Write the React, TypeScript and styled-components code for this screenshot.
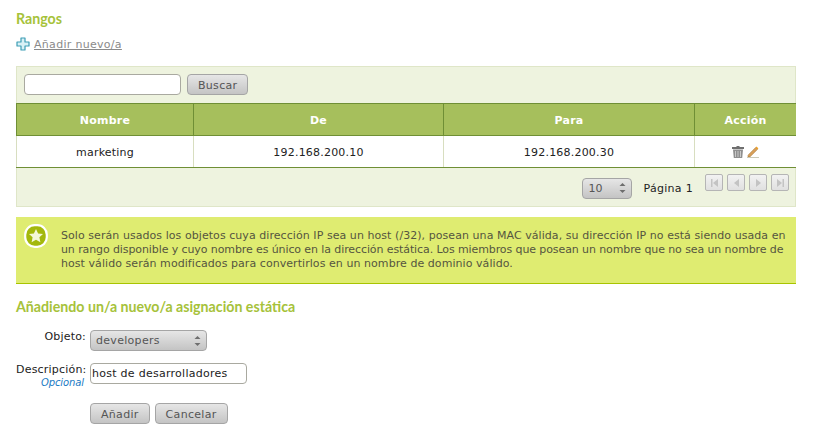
import React from 'react';
import styled, { createGlobalStyle } from 'styled-components';

const GlobalStyle = createGlobalStyle`
  html, body {
    margin: 0;
    padding: 0;
    background: #ffffff;
  }
  body {
    font-family: "DejaVu Sans", Verdana, sans-serif;
    font-size: 11px;
    color: #222222;
  }
`;

const PlusIcon = () => (
  <svg width="14" height="14" viewBox="0 0 14 14">
    <path
      d="M5 1h4v4h4v4H9v4H5V9H1V5h4z"
      fill="#d8f1f6"
      stroke="#3c9db5"
      strokeWidth="1.2"
      strokeLinejoin="round"
    />
  </svg>
);

const TrashIcon = () => (
  <svg width="12" height="12" viewBox="0 0 12 12">
    <path d="M4.5 0h3v1h4.5v2H0V1h4.5z" fill="#6f6f6f" />
    <path d="M1 3.5h10l-.8 8.5H1.8z" fill="#8f8f8f" />
    <path d="M3.5 5v6M6 5v6M8.5 5v6" stroke="#cfcfcf" strokeWidth="0.9" />
  </svg>
);

const PencilIcon = () => (
  <svg width="12" height="12" viewBox="0 0 12 12">
    <path d="M1 9.2 8.6 1.6l1.8 1.8L2.8 11H1z" fill="#d9a05a" stroke="#9a6a2a" strokeWidth="0.5" />
    <path d="M8.6 1.6 9.6.6l1.8 1.8-1 1z" fill="#f0a020" />
    <path d="M0 11.5h12" stroke="#c9c9b8" strokeWidth="1" />
  </svg>
);

const StarBadge = () => (
  <svg width="24" height="24" viewBox="0 0 24 24">
    <rect x="1.2" y="1.2" width="21.6" height="21.6" rx="9.5" fill="#a3b80c" stroke="#ffffff" strokeWidth="2.2" />
    <path
      d="M12 5l2.1 4.5 4.9.5-3.6 3.3 1 4.9-4.4-2.5-4.4 2.5 1-4.9L5 10l4.9-.5z"
      fill="#f3f7d8"
    />
  </svg>
);

const SpinnerArrows = () => (
  <svg width="7" height="12" viewBox="0 0 7 12">
    <path d="M3.5 1 6.5 4h-6z" fill="#6e6e6e" />
    <path d="M3.5 11 .5 8h6z" fill="#6e6e6e" />
  </svg>
);

type PagerKind = 'first' | 'prev' | 'next' | 'last';

const PagerGlyph = ({ kind }: { kind: PagerKind }) => (
  <svg width="9" height="10" viewBox="0 0 9 10">
    {kind === 'first' && <path d="M1 1h1.5v8H1zM8 1v8L3 5z" fill="#c3c3c3" />}
    {kind === 'prev' && <path d="M7 1v8L2 5z" fill="#c3c3c3" />}
    {kind === 'next' && <path d="M2 1v8l5-4z" fill="#c3c3c3" />}
    {kind === 'last' && <path d="M1 1v8l5-4zM6.5 1H8v8H6.5z" fill="#c3c3c3" />}
  </svg>
);

const rows = [{ name: 'marketing', from: '192.168.200.10', to: '192.168.200.30' }];
const pagerKinds: PagerKind[] = ['first', 'prev', 'next', 'last'];
const noteLines = [
  {
    text: 'Solo serán usados los objetos cuya dirección IP sea un host (/32), posean una MAC válida, su dirección IP no está siendo usada en',
    spacing: 0.06,
  },
  {
    text: 'un rango disponible y cuyo nombre es único en la dirección estática. Los miembros que posean un nombre que no sea un nombre de',
    spacing: -0.1,
  },
  {
    text: 'host válido serán modificados para convertirlos en un nombre de dominio válido.',
    spacing: 0.06,
  },
];

export default function App() {
  return (
    <Page>
      <GlobalStyle />
      <Title>Rangos</Title>
      <AddRow>
        <PlusIcon />
        <AddLink href="#">Añadir nuevo/a</AddLink>
      </AddRow>

      <SearchBar>
        <SearchInput />
        <GreyButton>Buscar</GreyButton>
      </SearchBar>

      <DataTable>
        <colgroup>
          <col width="177" />
          <col width="250" />
          <col width="251" />
          <col width="102" />
        </colgroup>
        <thead>
          <tr>
            <HeadCell>Nombre</HeadCell>
            <HeadCell>De</HeadCell>
            <HeadCell>Para</HeadCell>
            <HeadCell>Acción</HeadCell>
          </tr>
        </thead>
        <tbody>
          {rows.map((row) => (
            <tr key={row.name}>
              <BodyCell>{row.name}</BodyCell>
              <BodyCell>{row.from}</BodyCell>
              <BodyCell>{row.to}</BodyCell>
              <BodyCell>
                <Actions>
                  <TrashIcon />
                  <PencilIcon />
                </Actions>
              </BodyCell>
            </tr>
          ))}
        </tbody>
      </DataTable>

      <Footer>
        <PageSize>
          10
          <SpinnerArrows />
        </PageSize>
        <PageLabel>Página 1</PageLabel>
        <Pager>
          {pagerKinds.map((kind) => (
            <PagerButton key={kind}>
              <PagerGlyph kind={kind} />
            </PagerButton>
          ))}
        </Pager>
      </Footer>

      <Note>
        <NoteIcon>
          <StarBadge />
        </NoteIcon>
        <NoteText>
          {noteLines.map((line) => (
            <NoteLine key={line.text} $spacing={line.spacing}>
              {line.text}
            </NoteLine>
          ))}
        </NoteText>
      </Note>

      <FormTitle>Añadiendo un/a nuevo/a asignación estática</FormTitle>

      <FormRow>
        <FieldLabel>Objeto:</FieldLabel>
        <SelectBox>
          developers
          <SpinnerArrows />
        </SelectBox>
      </FormRow>
      <DescriptionRow>
        <FieldLabel>
          Descripción:
          <Optional>Opcional</Optional>
        </FieldLabel>
        <TextInput defaultValue="host de desarrolladores" />
      </DescriptionRow>
      <FormButtons>
        <GreyButton>Añadir</GreyButton>
        <GreyButton>Cancelar</GreyButton>
      </FormButtons>
    </Page>
  );
}

const Page = styled.div`
  width: 780px;
  height: 437px;
  padding-left: 16px;
  overflow: hidden;
`;
const Title = styled.h2`
  margin: 0;
  padding-top: 10px;
  height: 17px;
  font-family: Lato, "DejaVu Sans", sans-serif;
  font-size: 14.2px;
  line-height: 17px;
  font-weight: 700;
  color: #a6c23a;
`;
const AddRow = styled.div`
  display: flex;
  align-items: center;
  gap: 4px;
  height: 14px;
  margin-top: 10px;
`;
const AddLink = styled.a`
  color: #8a8a8a;
  font-size: 11px;
  letter-spacing: 0.3px;
`;
const SearchBar = styled.div`
  display: flex;
  align-items: center;
  gap: 6px;
  height: 37px;
  margin-top: 15px;
  padding: 0 0 1px 7px;
  box-sizing: border-box;
  background: #eef3df;
  border: 1px solid #dfe6c8;
  border-bottom: none;
`;
const SearchInput = styled.input`
  width: 157px;
  height: 21px;
  padding: 0 3px;
  box-sizing: border-box;
  background: #ffffff;
  border: 1px solid #a9a9a0;
  border-radius: 4px;
`;
const GreyButton = styled.button`
  height: 21px;
  padding: 1px 10px 0;
  font-family: inherit;
  font-size: 11px;
  letter-spacing: 0.3px;
  color: #555555;
  background: linear-gradient(#e6e6e6, #c4c4c4);
  border: 1px solid #a5a5a5;
  border-radius: 4px;
`;
const DataTable = styled.table`
  width: 780px;
  table-layout: fixed;
  border-collapse: collapse;
  background: #ffffff;
`;
const HeadCell = styled.th`
  height: 30px;
  padding: 1px 0 0;
  font-size: 11px;
  font-weight: 700;
  letter-spacing: 0.25px;
  color: #ffffff;
  background: #a6bf5c;
  border: 1px solid #6f8f35;
`;
const BodyCell = styled.td`
  height: 30px;
  padding: 1px 0 0;
  font-size: 11px;
  letter-spacing: 0.2px;
  text-align: center;
  color: #222222;
  border-left: 1px solid #d8dec0;
  border-right: 1px solid #d8dec0;
  border-bottom: 1px solid #6f8f35;
`;
const Actions = styled.div`
  display: flex;
  justify-content: center;
  gap: 3px;
  padding-right: 1px;
`;
const Footer = styled.div`
  display: flex;
  align-items: center;
  justify-content: flex-end;
  height: 39px;
  box-sizing: border-box;
  padding: 2px 6px 0 0;
  background: #eef3df;
  border: 1px solid #dfe6c8;
  border-top: none;
`;
const PageSize = styled.div`
  display: flex;
  align-items: center;
  justify-content: space-between;
  width: 50px;
  height: 21px;
  padding: 0 5px;
  box-sizing: border-box;
  font-size: 11px;
  color: #555555;
  background: linear-gradient(#e6e6e6, #c4c4c4);
  border: 1px solid #a5a5a5;
  border-radius: 4px;
`;
const PageLabel = styled.span`
  margin: 0 12px 0 11px;
  font-size: 11px;
  letter-spacing: 0.3px;
`;
const Pager = styled.div`
  display: flex;
  gap: 4px;
  margin-top: -11px;
`;
const PagerButton = styled.div`
  display: flex;
  align-items: center;
  justify-content: center;
  width: 18px;
  height: 17px;
  box-sizing: border-box;
  background: linear-gradient(#f2f2f2, #e0e0e0);
  border: 1px solid #b5b5b5;
  border-radius: 2px;
`;
const Note = styled.div`
  display: flex;
  gap: 13px;
  height: 67px;
  margin-top: 10px;
  padding: 7px 0 0 8px;
  box-sizing: border-box;
  background: #dfec71;
  border-bottom: 1px solid #a8c400;
`;
const NoteIcon = styled.div`
  flex: none;
  width: 24px;
  height: 24px;
`;
const NoteText = styled.div`
  padding-top: 5px;
  font-size: 11px;
  line-height: 14px;
  color: #555540;
`;
const NoteLine = styled.div<{ $spacing: number }>`
  white-space: nowrap;
  letter-spacing: ${(p) => p.$spacing}px;
`;
const FormTitle = styled.h3`
  margin: 14px 0 0;
  height: 17px;
  font-family: Lato, "DejaVu Sans", sans-serif;
  font-size: 14.2px;
  line-height: 17px;
  font-weight: 700;
  color: #a6c23a;
`;
const FormRow = styled.div`
  display: flex;
  gap: 4px;
  margin-top: 15px;
`;
const DescriptionRow = styled(FormRow)`
  margin-top: 12px;
`;
const FieldLabel = styled.label`
  width: 70px;
  text-align: right;
  font-size: 11px;
  line-height: 13px;
  letter-spacing: 0.2px;
  color: #222222;
`;
const Optional = styled.em`
  display: block;
  padding-right: 2px;
  font-size: 10px;
  line-height: 13px;
  letter-spacing: -0.1px;
  color: #1a7ac4;
`;
const SelectBox = styled.div`
  display: flex;
  align-items: center;
  justify-content: space-between;
  width: 117px;
  height: 21px;
  padding: 0 5px;
  box-sizing: border-box;
  font-size: 11px;
  letter-spacing: 0.3px;
  color: #555555;
  background: linear-gradient(#e6e6e6, #c4c4c4);
  border: 1px solid #a5a5a5;
  border-radius: 4px;
`;
const TextInput = styled.input`
  width: 157px;
  height: 21px;
  padding: 0 1px;
  box-sizing: border-box;
  font-family: inherit;
  font-size: 11px;
  letter-spacing: 0.27px;
  color: #222222;
  background: #ffffff;
  border: 1px solid #a9a9a0;
  border-radius: 4px;
`;
const FormButtons = styled.div`
  display: flex;
  gap: 5px;
  margin-top: 14px;
  padding-left: 74px;
`;
